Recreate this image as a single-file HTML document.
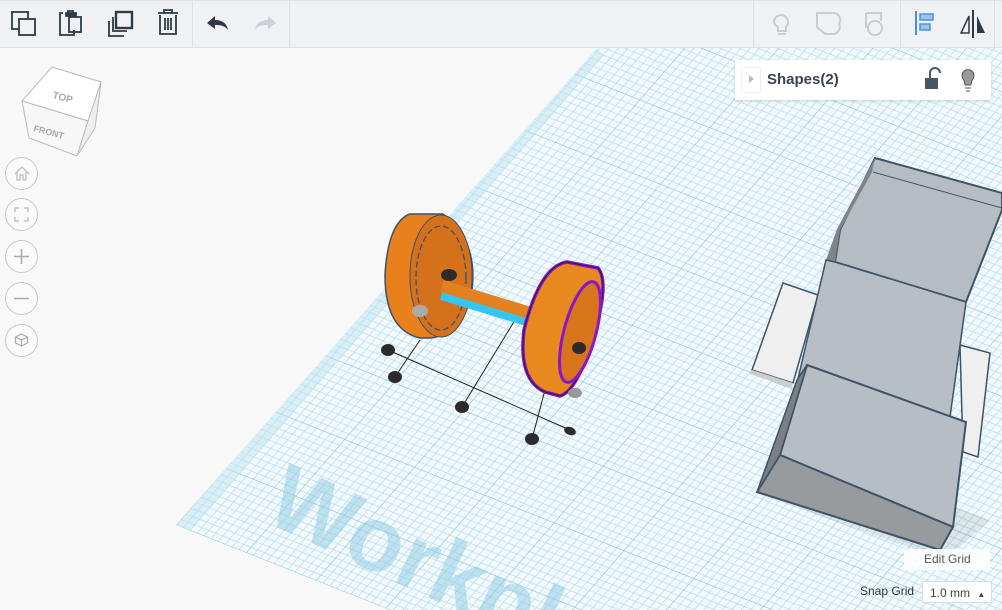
<!DOCTYPE html>
<html style="overflow:hidden"><head><meta charset="utf-8"><style>
*{margin:0;padding:0;box-sizing:border-box}
html,body{width:1002px;height:610px;overflow:hidden}
body{background:#f8f8f8;font-family:"Liberation Sans",sans-serif;position:relative}
#tb{position:absolute;left:0;top:0;width:1002px;height:48px;background:#f0f1f4;border-bottom:1px solid #dfe2e6;border-top:1px solid #e2e4e8;overflow:hidden}
.sep{position:absolute;top:0;width:1px;height:47px;background:#dde0e5}
svg{position:absolute;left:0;top:0}
.panel{position:absolute;left:735px;top:60px;width:256px;height:40px;background:#fff;box-shadow:0 1px 3px rgba(0,0,0,.15)}
.panel .t{position:absolute;left:32px;top:11px;font-size:15px;font-weight:bold;color:#3a4350}
.panel .ex{position:absolute;left:6px;top:7px;width:20px;height:26px;border:1px solid #eee;border-radius:3px}
.cbtn{position:absolute;left:5px;width:33px;height:33px;border:1px solid #c8c8c8;border-radius:50%;background:#fafafa}
.eg{position:absolute;left:904px;top:549px;width:86px;height:21px;background:rgba(255,255,255,.85);font-size:12px;color:#555;padding:3px 0 0 20px}
.sg{position:absolute;left:860px;top:584px;font-size:12px;color:#333}
.mm{position:absolute;left:922px;top:581px;width:70px;height:22px;background:rgba(255,255,255,.9);border:1px solid #ddd;font-size:12px;color:#444;padding:4px 0 0 7px}
</style></head><body>
<svg width="1002" height="610" viewBox="0 0 1002 610">
<defs>
<pattern id="g" width="10" height="10" patternUnits="userSpaceOnUse" patternTransform="matrix(6.98 2.78 4.92 -5.66 176 525)">
<rect width="10" height="10" fill="#f3f9fc"/>
<g stroke="#b3def0" stroke-width="0.1">
<path d="M1 0V10M2 0V10M3 0V10M4 0V10M5 0V10M6 0V10M7 0V10M8 0V10M9 0V10M0 1H10M0 2H10M0 3H10M0 4H10M0 5H10M0 6H10M0 7H10M0 8H10M0 9H10"/>
</g>
<path d="M0 0V10M0 0H10" stroke="#7ec2de" stroke-width="0.16"/>
</pattern>
</defs>
<polygon points="597,48 1002,48 1002,610 390,610 176,525" fill="url(#g)"/>
<polygon points="597,48 176,525 190,531 604,55" fill="#bfe3f1" opacity=".5"/>
<text x="262" y="520" font-size="92" font-weight="bold" fill="#8ccbe2" opacity=".5" transform="rotate(25 262 520)" font-family="Liberation Sans,sans-serif">Workpl</text>
<polygon points="760,495 945,560 990,520 800,450" fill="#000" opacity=".08"/>
<polygon points="783,283 818,295 793,383 752,370" fill="#efefef" stroke="#3f5368" stroke-width="1.5"/>
<polygon points="752,370 793,383 792,388 750,374" fill="#ccc"/>
<polygon points="960,345 990,353 978,457 963,452" fill="#efefef" stroke="#3f5368" stroke-width="1.5"/>
<polygon points="875,158 1002,193 1002,210 966,302 835,262 840,230" fill="#b5bcc2" stroke="#3f5368" stroke-width="2"/>
<line x1="873" y1="172" x2="1002" y2="208" stroke="#3f5368"/>
<polygon points="875,158 872,172 840,230 835,262 826,260 837,229" fill="#808487"/>
<polygon points="835,262 966,302 950,417 807,365 797,380 780,455 826,260" fill="#b7bec5" stroke="#3f5368" stroke-width="1.5"/>
<polygon points="807,365 966,422 953,527 780,455" fill="#b6bdc4" stroke="#3f5368" stroke-width="2"/>
<polygon points="780,455 953,527 940,550 757,492" fill="#979b9e" stroke="#3f5368" stroke-width="2"/>
<polygon points="757,492 780,455 807,365 797,380" fill="#7c8083" stroke="#3f5368" stroke-width="1.5"/>
<g stroke="#222" stroke-width="1" fill="none">
<line x1="388" y1="350" x2="570" y2="430"/>
<line x1="395" y1="377" x2="420" y2="340"/>
<line x1="462" y1="407" x2="515" y2="320"/>
<line x1="532" y1="439" x2="545" y2="390"/>
</g>
<g fill="#2b2b2b">
<ellipse cx="388" cy="350" rx="7" ry="6"/><ellipse cx="395" cy="377" rx="7" ry="6"/>
<ellipse cx="462" cy="407" rx="7" ry="6"/><ellipse cx="532" cy="439" rx="7" ry="6"/>
<ellipse cx="570" cy="431" rx="6" ry="4" transform="rotate(20 570 431)"/>
</g>
<ellipse cx="430" cy="300" rx="40" ry="25" fill="#000" opacity=".06"/>
<path d="M410 214 L443 214 Q478 240 472 290 Q462 335 430 338 L420 338 Q385 330 385 275 Q388 222 410 214Z" fill="#e8801e" stroke="#3d5169" stroke-width="1.5"/>
<ellipse cx="441" cy="276" rx="31" ry="61" fill="#d6711b" stroke="#3d5169" stroke-width="1"/>
<ellipse cx="441" cy="278" rx="25" ry="52" fill="none" stroke="#3d5169" stroke-width="1.3" stroke-dasharray="6 3"/>
<ellipse cx="420" cy="311" rx="8" ry="6" fill="#aaa"/>
<line x1="442" y1="293" x2="540" y2="323" stroke="#35c6ef" stroke-width="14"/>
<line x1="442" y1="286" x2="540" y2="316" stroke="#e3801f" stroke-width="12"/>
<ellipse cx="449" cy="275" rx="8" ry="6" fill="#2b2b2b"/>
<path d="M567 262 L598 268 Q608 280 598 320 Q580 390 560 396 L545 392 Q518 380 524 330 Q540 266 567 262Z" fill="#e8891f" stroke="#8a16c8" stroke-width="3.5"/>
<path d="M567 262 L598 268 Q608 280 598 320 Q580 390 560 396 L545 392 Q518 380 524 330 Q540 266 567 262Z" fill="none" stroke="#222" stroke-width="1"/>
<ellipse cx="580" cy="332" rx="16" ry="52" transform="rotate(15 580 332)" fill="#d8741c" stroke="#8a16c8" stroke-width="3"/>
<ellipse cx="579" cy="348" rx="7" ry="6" fill="#2b2b2b"/>
<ellipse cx="575" cy="393" rx="7" ry="5" fill="#999"/>
<g font-family="Liberation Sans,sans-serif" font-weight="bold" fill="#aaa">
<polygon points="52,67 101,82 88,121 22,101" fill="#fff" stroke="#bbb"/>
<polygon points="22,101 88,121 77,156 29,138" fill="#f7f7f7" stroke="#bbb"/>
<polygon points="101,82 88,121 77,156 95,128" fill="#eee" stroke="#bbb"/>
<text x="52" y="98" font-size="10" transform="rotate(15 52 98)">TOP</text>
<text x="33" y="131" font-size="9" transform="rotate(15 33 131)">FRONT</text>
</g>
</svg>
<div id="tb">
<div class="sep" style="left:192px"></div><div class="sep" style="left:289px"></div>
<div class="sep" style="left:753px"></div><div class="sep" style="left:900px"></div><div class="sep" style="left:994px"></div>
<svg width="1002" height="48" viewBox="0 1 1002 48">
<g fill="none" stroke="#2f3a44" stroke-width="1.8">
<rect x="12" y="12" width="16" height="17"/><rect x="19" y="19" width="16" height="16" fill="#f0f1f4"/>
<path d="M63 13H60V35H74V30M68 13V11h5v2"/><rect x="69" y="17" width="12" height="15"/><path d="M66 13h10v3H66z" fill="#2f3a44"/>
<rect x="116" y="12" width="16" height="16" stroke-width="2.4"/><path d="M113 17V31h14M109 21V36l15 0"/>
<path d="M158 13h20M164 13v-3h8v3M160 15v19h16V15M165 18v12M168 18v12M171 18v12"/>
</g>
<path d="M207 23l8-7v4c8 0 12 4 13 10c-3-4-7-5-13-5v4z" fill="#2f3a44"/>
<path d="M276 23l-8-7v4c-8 0-12 4-13 10c3-4 7-5 13-5v4z" fill="#c8d2dc"/>
<g fill="none" stroke="#c8cdd2" stroke-width="2">
<path d="M774 22a7 7 0 1 1 12 5v4h-8v-4a7 7 0 0 1-4-5zM778 34h8"/>
<path d="M817 13h17a7 7 0 0 1 5 11a7 7 0 0 1-7 10h-7l-8-7z"/>
<path d="M866 13h15v8"/><circle cx="875" cy="28" r="7"/><path d="M866 13v14h2"/>
</g>
<path d="M916 11v24" stroke="#4a90e2" stroke-width="2"/><rect x="920" y="14" width="13" height="6" fill="#9cc3f0" stroke="#4a90e2" stroke-width="1.5"/><rect x="920" y="24" width="10" height="6" fill="#9cc3f0" stroke="#4a90e2" stroke-width="1.5"/>
<path d="M973 10v28" stroke="#2f3a44" stroke-width="2"/><path d="M969 16l-8 17h8z" fill="none" stroke="#2f3a44" stroke-width="1.5"/><path d="M977 16l8 17h-8z" fill="#2f3a44"/>
</svg>
</div>
<div class="panel"><div class="ex"><span style="position:absolute;left:7px;top:7px;border-left:5px solid #bbb;border-top:4px solid transparent;border-bottom:4px solid transparent"></span></div><div class="t">Shapes(2)</div>
<svg width="60" height="40" style="left:186px;top:0"><path d="M9 18v-5a5 5 0 0 1 10 0" fill="none" stroke="#4a5563" stroke-width="2"/><rect x="4" y="18" width="13" height="11" fill="#4a5563"/><path d="M42 19a6 6 0 1 1 10 0q-2 3-2 6h-6q0-3-2-6zM44 28h6M45 31h4" fill="#999" stroke="#555" stroke-width="1"/></svg></div>
<div class="cbtn" style="top:157px"><svg width="31" height="31"><path d="M9 16l7-7 7 7M11 14v8h3v-5h3v5h3v-8" fill="none" stroke="#bbb" stroke-width="1.2"/></svg></div>
<div class="cbtn" style="top:198px"><svg width="31" height="31"><path d="M9 13V9h4M18 9h4v4M22 18v4h-4M13 22H9v-4" fill="none" stroke="#bbb" stroke-width="1.3"/></svg></div>
<div class="cbtn" style="top:240px"><svg width="31" height="31"><path d="M15.5 8v15M8 15.5h15" stroke="#aaa" stroke-width="1.5"/></svg></div>
<div class="cbtn" style="top:282px"><svg width="31" height="31"><path d="M8 15.5h15" stroke="#aaa" stroke-width="1.5"/></svg></div>
<div class="cbtn" style="top:324px"><svg width="31" height="31"><path d="M15.5 9l6 3v6l-6 3-6-3v-6zM9.5 12l6 3 6-3M15.5 15v6" fill="none" stroke="#aaa" stroke-width="1.2"/></svg></div>
<div class="eg">Edit Grid</div>
<div class="sg">Snap Grid</div>
<div class="mm">1.0 mm <span style="font-size:8px;margin-left:4px">▲</span></div>
</body></html>
